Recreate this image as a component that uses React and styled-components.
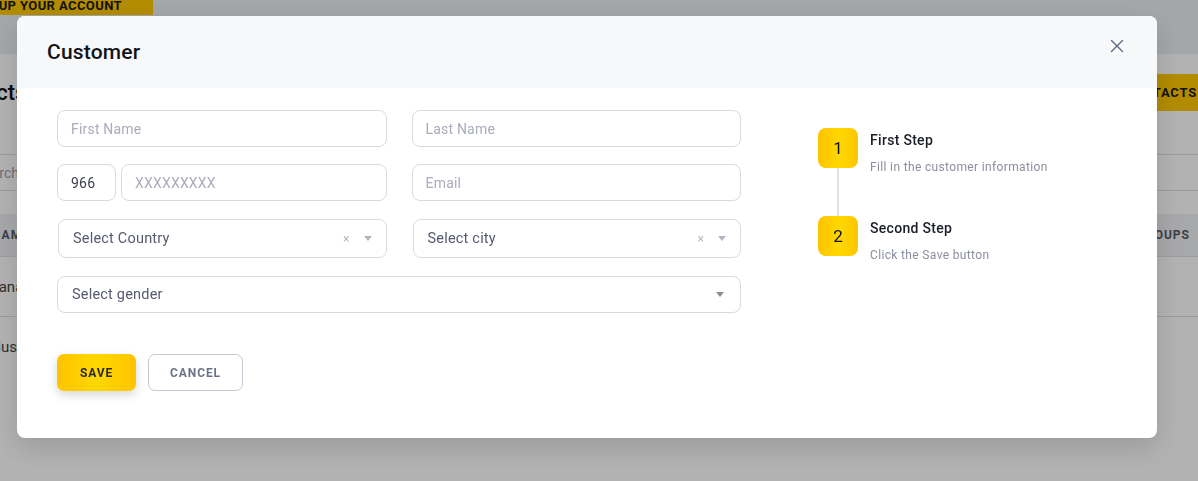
import React from "react";
import styled, { createGlobalStyle } from "styled-components";

const GlobalStyle = createGlobalStyle`
  html, body {
    margin: 0;
    padding: 0;
  }
  body {
    width: 1198px;
    height: 481px;
    overflow: hidden;
    background: #ffffff;
    font-family: Roboto, "Noto Sans", Arial, sans-serif;
    color: #1b1d28;
  }
  * {
    box-sizing: border-box;
  }
`;

/* ---------- page underneath the dialog ---------- */

const Page = styled.div`
  width: 1198px;
  height: 481px;
  overflow: hidden;
  background: #ffffff;
`;

const TopBar = styled.header`
  height: 54px;
  background: #eaeff4;
`;

const SetupTag = styled.div`
  width: 153px;
  height: 15px;
  background: #ffc800;
  display: flex;
  justify-content: flex-end;
  align-items: flex-end;
  padding: 0 31px 3px 0;
  overflow: hidden;
  white-space: nowrap;
  font-size: 13px;
  line-height: 13px;
  font-weight: 700;
  letter-spacing: 0.4px;
  color: #1a1a1a;
`;

const Content = styled.main`
  margin: 0 -15px 0 -26px;
  padding-top: 20px;
`;

const PageHead = styled.div`
  display: flex;
  align-items: center;
  justify-content: space-between;
  height: 37px;
`;

const PageTitle = styled.h1`
  margin: 0 0 0 -36px;
  font-size: 22px;
  font-weight: 500;
  color: #111;
`;

const AddButton = styled.button`
  height: 37px;
  padding: 0 16px 0 20px;
  border: 0;
  border-radius: 6px;
  background: #ffc800;
  font-family: inherit;
  font-size: 13px;
  font-weight: 700;
  letter-spacing: 0.8px;
  color: #1a1a1a;
`;

const SearchRow = styled.div`
  margin-top: 43px;
  height: 37px;
  border-top: 1px solid #e0e0e0;
  border-bottom: 1px solid #e0e0e0;
  display: flex;
  align-items: center;
  padding-left: 2px;
  font-size: 14px;
  color: #9a9ca8;
`;

const Table = styled.div`
  margin-top: 23px;
`;

const TableHead = styled.div`
  height: 43px;
  background: #f0f1f4;
  border-bottom: 1px solid #e0e0e0;
  display: flex;
  align-items: center;
  justify-content: space-between;
  padding: 0 23px 0 18px;
  font-size: 12px;
  font-weight: 700;
  letter-spacing: 1px;
  color: #555a66;
`;

const TableRow = styled.div`
  height: 60px;
  display: flex;
  align-items: center;
  padding-left: 14px;
  font-size: 15px;
  color: #444;
  border-bottom: ${(p) => (p.$last ? "none" : "1px solid #e0e0e0")};
`;

const Dim = styled.div`
  position: fixed;
  inset: 0;
  background: rgba(0, 0, 0, 0.3);
`;

/* ---------- dialog ---------- */

const Dialog = styled.section`
  position: fixed;
  left: 17px;
  top: 16px;
  width: 1140px;
  background: #ffffff;
  border-radius: 8px;
  overflow: hidden;
  box-shadow: 0 10px 28px rgba(0, 0, 0, 0.14);
`;

const DialogHeader = styled.div`
  height: 72px;
  background: #f7f8fa;
  display: flex;
  align-items: center;
  justify-content: space-between;
  padding: 0 33px 0 30px;
`;

const DialogTitle = styled.h2`
  margin: 0;
  font-size: 21px;
  font-weight: 500;
  color: #111318;
  letter-spacing: 0.2px;
`;

const CloseButton = styled.button`
  align-self: flex-start;
  margin-top: 23px;
  width: 14px;
  height: 14px;
  padding: 0;
  border: 0;
  background: none;
  display: flex;
  color: #5c6b84;
`;

const DialogBody = styled.div`
  display: flex;
  align-items: flex-start;
  padding: 22px 40px 47px 40px;
`;

const Form = styled.form`
  width: 684px;
  display: flex;
  flex-direction: column;
  gap: 18px;
`;

const FieldRow = styled.div`
  display: grid;
  grid-template-columns: 1fr 1fr;
  gap: 25px;
  margin-top: ${(p) => (p.$pullUp ? "-1px" : "0")};
`;

const PhoneGroup = styled.div`
  display: flex;
  gap: 5px;
`;

const TextInput = styled.input`
  width: ${(p) => p.$width || "100%"};
  flex: ${(p) => (p.$width ? "none" : "1")};
  min-width: 0;
  height: 37px;
  padding: 0 13px;
  border: 1px solid #d8dae0;
  border-radius: 8px;
  background: #fff;
  font-family: inherit;
  font-size: 14px;
  letter-spacing: 0.2px;
  color: #3b3f4e;
  outline: none;

  &::placeholder {
    color: #a9acb9;
  }
`;

const SelectBox = styled.div`
  height: ${(p) => (p.$tall ? "39px" : "37px")};
  margin: ${(p) => (p.$tall ? "0 0 0 1px" : "0")};
  display: flex;
  align-items: center;
  padding: 0 ${(p) => (p.$tall ? "14px" : "16px")} 0 14px;
  border: 1px solid #d8dae0;
  border-radius: 8px;
  background: #fff;
`;

const SelectValue = styled.span`
  flex: 1;
  font-size: 14.5px;
  letter-spacing: 0.2px;
  color: #555a6e;
`;

const ClearMark = styled.span`
  font-size: 12px;
  line-height: 1;
  color: #b4b7c1;
  margin-right: 14px;
`;

const Caret = styled.span`
  width: 0;
  height: 0;
  border-left: 4.5px solid transparent;
  border-right: 4.5px solid transparent;
  border-top: 5px solid ${(p) => p.$tone || "#b4b7c1"};
`;

const Actions = styled.div`
  display: flex;
  gap: 12px;
  margin-top: 23px;
`;

const SaveButton = styled.button`
  width: 79px;
  height: 37px;
  border: 0;
  border-radius: 7px;
  background: linear-gradient(90deg, #ffc300 0%, #ffd800 50%, #ffc400 100%);
  box-shadow: 0 4px 10px rgba(0, 0, 0, 0.16);
  font-family: inherit;
  font-size: 12px;
  font-weight: 700;
  letter-spacing: 0.9px;
  color: #2a2a2a;
`;

const CancelButton = styled.button`
  width: 95px;
  height: 37px;
  border: 1px solid #c6cad4;
  border-radius: 7px;
  background: #fff;
  font-family: inherit;
  font-size: 12px;
  font-weight: 700;
  letter-spacing: 0.9px;
  color: #6b7389;
`;

/* ---------- step guide ---------- */

const Steps = styled.ol`
  list-style: none;
  margin: 18px 0 0 77px;
  padding: 0;
`;

const Step = styled.li`
  display: grid;
  grid-template-columns: 40px auto;
  column-gap: 12px;
`;

const Marker = styled.div`
  display: flex;
  flex-direction: column;
  align-items: center;
`;

const StepNumber = styled.div`
  width: 40px;
  height: 40px;
  border-radius: 8px;
  background: linear-gradient(90deg, #ffc300 0%, #ffd800 55%, #ffc500 100%);
  display: flex;
  align-items: center;
  justify-content: center;
  font-size: 17px;
  color: #111;
`;

const Connector = styled.div`
  width: 2px;
  height: 48px;
  background: #dfe1e6;
`;

const StepText = styled.div`
  padding-top: 4px;
`;

const StepTitle = styled.div`
  font-size: 14px;
  font-weight: 500;
  letter-spacing: 0.3px;
  color: #1b1d28;
  line-height: 16px;
`;

const StepHint = styled.div`
  margin-top: 12px;
  font-size: 12px;
  letter-spacing: 0.35px;
  color: #8b8fa0;
  line-height: 14px;
`;

const steps = [
  { title: "First Step", hint: "Fill in the customer information" },
  { title: "Second Step", hint: "Click the Save button" },
];

function CloseIcon() {
  return (
    <svg width="14" height="14" viewBox="0 0 14 14" fill="none">
      <path d="M1.5 1.5L12.5 12.5M12.5 1.5L1.5 12.5" stroke="currentColor" strokeWidth="1.4" strokeLinecap="round" />
    </svg>
  );
}

function Select({ label, clearable, tall, tone }) {
  return (
    <SelectBox $tall={tall}>
      <SelectValue>{label}</SelectValue>
      {clearable && <ClearMark>×</ClearMark>}
      <Caret $tone={tone} />
    </SelectBox>
  );
}

export default function App() {
  return (
    <>
      <GlobalStyle />
      <Page>
        <TopBar>
          <SetupTag>SET UP YOUR ACCOUNT</SetupTag>
        </TopBar>
        <Content>
          <PageHead>
            <PageTitle>Contacts</PageTitle>
            <AddButton>ADD CONTACTS</AddButton>
          </PageHead>
          <SearchRow>Search</SearchRow>
          <Table>
            <TableHead>
              <span>NAME</span>
              <span>GROUPS</span>
            </TableHead>
            <TableRow>Hanan</TableRow>
            <TableRow $last>Musa</TableRow>
          </Table>
        </Content>
      </Page>
      <Dim />
      <Dialog>
        <DialogHeader>
          <DialogTitle>Customer</DialogTitle>
          <CloseButton aria-label="Close">
            <CloseIcon />
          </CloseButton>
        </DialogHeader>
        <DialogBody>
          <Form onSubmit={(e) => e.preventDefault()}>
            <FieldRow>
              <TextInput placeholder="First Name" />
              <TextInput placeholder="Last Name" />
            </FieldRow>
            <FieldRow $pullUp>
              <PhoneGroup>
                <TextInput $width="59px" defaultValue="966" />
                <TextInput placeholder="XXXXXXXXX" />
              </PhoneGroup>
              <TextInput placeholder="Email" />
            </FieldRow>
            <FieldRow>
              <Select label="Select Country" clearable tall />
              <Select label="Select city" clearable tall />
            </FieldRow>
            <Select label="Select gender" tone="#8a8d99" />
            <Actions>
              <SaveButton type="submit">SAVE</SaveButton>
              <CancelButton type="button">CANCEL</CancelButton>
            </Actions>
          </Form>
          <Steps>
            {steps.map((s, i) => (
              <Step key={s.title}>
                <Marker>
                  <StepNumber>{i + 1}</StepNumber>
                  {i < steps.length - 1 && <Connector />}
                </Marker>
                <StepText>
                  <StepTitle>{s.title}</StepTitle>
                  <StepHint>{s.hint}</StepHint>
                </StepText>
              </Step>
            ))}
          </Steps>
        </DialogBody>
      </Dialog>
    </>
  );
}
